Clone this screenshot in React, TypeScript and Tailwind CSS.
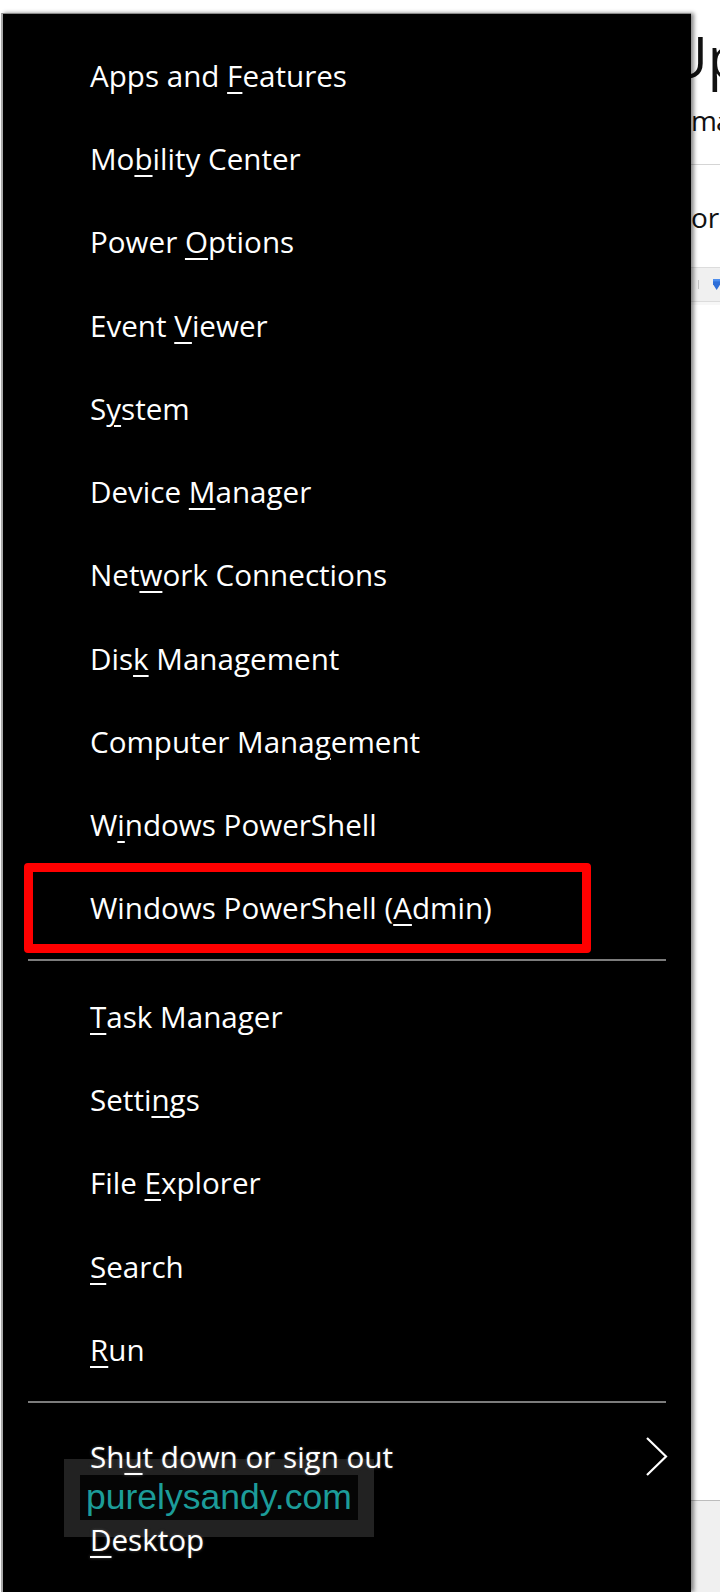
import React from "react";

const topItems: [string, number][] = [
  ["Apps and Features", 9],
  ["Mobility Center", 2],
  ["Power Options", 6],
  ["Event Viewer", 6],
  ["System", 1],
  ["Device Manager", 7],
  ["Network Connections", 3],
  ["Disk Management", 3],
  ["Computer Management", 13],
  ["Windows PowerShell", 1],
  ["Windows PowerShell (Admin)", 20],
];

const midItems: [string, number][] = [
  ["Task Manager", 0],
  ["Settings", 5],
  ["File Explorer", 5],
  ["Search", 0],
  ["Run", 0],
];

function Label({ text, k }: { text: string; k: number }) {
  return (
    <span className="whitespace-nowrap">
      {text.slice(0, k)}
      <span className="underline decoration-[2px] underline-offset-[5px]">
        {text.charAt(k)}
      </span>
      {text.slice(k + 1)}
    </span>
  );
}

function Row({ text, k, glow, children }: any) {
  return (
    <div
      className={
        "relative z-10 flex h-[83.27px] items-center justify-between pl-[87px] pr-[24px] " +
        (glow ? "[text-shadow:0_0_3px_#555]" : "")
      }
    >
      <Label text={text} k={k} />
      {children}
    </div>
  );
}

export default function App() {
  return (
    <div className="flex h-[1592px] w-[720px] items-start overflow-hidden bg-white font-['Open_Sans',sans-serif]">
      {/* the Win+X menu */}
      <div className="relative z-10 ml-[1px] mt-[13px] h-[1579px] w-[690px] shrink-0 border-l-2 border-t border-l-[#a8a8a8] border-t-[#8a8a8a] bg-black pt-[20px] text-[29.6px] leading-none text-white shadow-[3px_0_4px_rgba(0,0,0,0.45)]">
        {topItems.map(([t, k]) => (
          <Row key={t} text={t} k={k} />
        ))}
        <div className="ml-[25px] mt-[9px] h-[2px] w-[638px] bg-[#7c7c7c]" />
        <div className="mt-[14px]">
          {midItems.map(([t, k]) => (
            <Row key={t} text={t} k={k} />
          ))}
        </div>
        <div className="ml-[25px] mt-[10px] h-[2px] w-[638px] bg-[#7c7c7c]" />
        <div className="mt-[12px]">
          <Row text="Shut down or sign out" k={2} glow>
            <svg width="22" height="39" viewBox="0 0 22 39" className="mr-[-1px]">
              <polyline
                points="1,1 20,19.5 1,38"
                fill="none"
                stroke="#ffffff"
                strokeWidth="2.2"
              />
            </svg>
          </Row>
          <Row text="Desktop" k={0} glow />
        </div>

        {/* red highlight */}
        <div className="absolute left-[21px] top-[849px] h-[90px] w-[567px] rounded-[4px] border-[9px] border-[#ff0000]" />

        {/* watermark */}
        <div className="absolute left-[61px] top-[1445px] z-0 bg-[#222222] p-[16px] pb-[17px]">
          <div className="h-[45px] w-[278px] overflow-hidden whitespace-nowrap bg-[#050505] pl-[6px] font-['Liberation_Sans',Arial,sans-serif] text-[35.5px] leading-[45px] text-[#1c9c99]">
            purelysandy.com
          </div>
        </div>
      </div>

      {/* window behind, mostly hidden */}
      <div className="flex h-full min-w-0 flex-1 flex-col overflow-hidden text-[#111]">
        <div className="ml-[-24px] mt-[28px] whitespace-nowrap text-[56px] leading-[56px]">Up</div>
        <div className="mt-[22px] whitespace-nowrap text-[28px] leading-[28px] tracking-[-1px]">ma</div>
        <div className="mt-[30px] h-px bg-[#d5d5d5]" />
        <div className="mt-[38px] whitespace-nowrap text-[28px] leading-[28px]">or</div>
        <div className="mt-[36px] flex h-[35px] items-center border-y border-[#dcdcdc] bg-[#f0f0f0]">
          <div className="ml-[7px] h-[9px] w-px bg-[#c4c4c4]" />
          <svg width="10" height="16" viewBox="0 0 10 16" className="ml-[14px]">
            <path d="M0 0 H10 V7 L5 15 L0 7 Z" fill="#2f6fd8" />
            <path d="M0 0 H10 V3 H0 Z" fill="#4b8ef0" />
          </svg>
        </div>
        <div className="h-[3px] bg-[#f7f7f7]" />
        <div className="mt-auto h-[92px] border-t border-[#bdbdbd] bg-[#f0f0f0]" />
      </div>
    </div>
  );
}
